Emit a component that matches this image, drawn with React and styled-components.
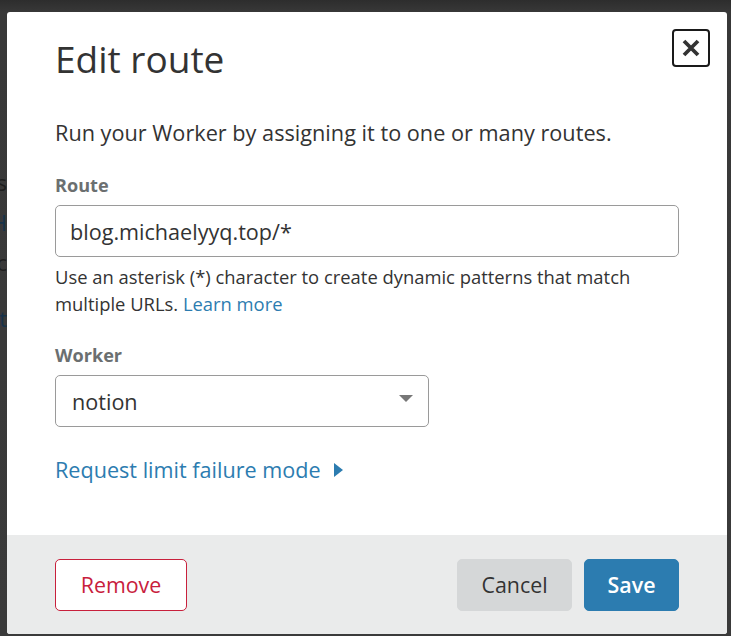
import React from "react";
import styled, { createGlobalStyle } from "styled-components";

const GlobalStyles = createGlobalStyle`
  html, body {
    margin: 0;
    padding: 0;
    height: 100%;
  }
  body {
    background: #3a3a3a;
    font-family: 'Open Sans', 'Noto Sans', sans-serif;
    color: #333;
    overflow: hidden;
  }
`;

const Backdrop = styled.div`
  position: fixed;
  inset: 0;
  background: linear-gradient(#2d2d2d 0, #383838 12px, #3a3a3a 100%);
`;

const PeekColumn = styled.div`
  width: 7px;
  overflow: hidden;
  padding-top: 162px;
  display: flex;
  flex-direction: column;
  align-items: flex-end;
  font-size: 22px;
  line-height: 40px;
`;

const Peek = styled.span`
  color: ${(p) => (p.link ? "#17324a" : "#1e1e1e")};
  white-space: nowrap;
  margin-top: ${(p) => p.gap || 0}px;
`;

const Modal = styled.div`
  position: fixed;
  top: 12px;
  left: 7px;
  width: 720px;
  height: 622px;
  background: #fff;
  border-radius: 3px;
  display: flex;
  flex-direction: column;
  overflow: hidden;
`;

const Body = styled.div`
  flex: 1 1 auto;
  min-height: 0;
  padding: 24px 48px 0;
  position: relative;
`;

const Title = styled.h2`
  margin: 0;
  font-size: 37px;
  line-height: 46px;
  font-weight: 400;
  color: #333;
`;

const CloseButton = styled.button`
  position: absolute;
  top: 17px;
  right: 17px;
  width: 38px;
  height: 38px;
  border: 2px solid #1a1a1a;
  border-radius: 4px;
  background: #fff;
  padding: 0;
  display: flex;
  align-items: center;
  justify-content: center;
`;

const Intro = styled.p`
  margin: 37px 0 0;
  font-size: 21.7px;
  line-height: 28px;
  color: #333;
`;

const Label = styled.div`
  margin-top: ${(p) => p.top}px;
  font-size: 18.1px;
  font-weight: 700;
  line-height: 24px;
  color: #6b6f70;
`;

const Field = styled.div`
  margin-top: 8px;
  width: ${(p) => p.width}px;
  height: 52px;
  box-sizing: border-box;
  border: 1px solid #9a9a9a;
  border-radius: 5px;
  display: flex;
  align-items: center;
  justify-content: space-between;
  padding: 0 15px 0 ${(p) => p.indent}px;
  font-size: 21.6px;
  color: #333;
`;

const Caret = styled.span`
  width: 0;
  height: 0;
  border-left: 7.5px solid transparent;
  border-right: 7.5px solid transparent;
  border-top: 7px solid #777;
  margin-bottom: 5px;
`;

const Help = styled.p`
  margin: 6px 0 0;
  font-size: 18.4px;
  line-height: 27px;
  color: #333;
`;

const Link = styled.a`
  color: #2c7cb0;
  text-decoration: none;
`;

const Disclosure = styled.div`
  margin-top: 29px;
  display: flex;
  align-items: center;
  gap: 13px;
  font-size: 21.6px;
  line-height: 28px;
  color: #2c7cb0;
`;

const RightTriangle = styled.span`
  width: 0;
  height: 0;
  border-top: 7px solid transparent;
  border-bottom: 7px solid transparent;
  border-left: 9px solid #2c7cb0;
`;

const Footer = styled.div`
  flex: 0 0 99px;
  background: #eaebeb;
  display: flex;
  align-items: center;
  justify-content: space-between;
  padding: 0 48px 0 48px;
`;

const Actions = styled.div`
  display: flex;
  gap: 12px;
`;

const Button = styled.button`
  height: 52px;
  width: ${(p) => p.width}px;
  padding: 0;
  box-sizing: border-box;
  border-radius: 5px;
  font-family: inherit;
  font-size: 21.4px;
  font-weight: ${(p) => (p.primary ? 600 : 400)};
  cursor: pointer;
  border: 1px solid ${(p) =>
    p.danger ? "#c8203c" : p.primary ? "#2c7cb0" : "#d5d7d8"};
  background: ${(p) =>
    p.danger ? "#fff" : p.primary ? "#2c7cb0" : "#d5d7d8"};
  color: ${(p) => (p.danger ? "#c8203c" : p.primary ? "#fff" : "#333")};
`;

const App = () => {
  return (
    <>
      <GlobalStyles />
      <Backdrop>
        <PeekColumn>
          <Peek>s</Peek>
          <Peek link>H</Peek>
          <Peek>c</Peek>
          <Peek link gap={16}>t</Peek>
        </PeekColumn>
      </Backdrop>
      <Modal>
        <Body>
          <Title>Edit route</Title>
          <CloseButton aria-label="Close">
            <svg width="20" height="20" viewBox="0 0 20 20">
              <path
                d="M3 3 L17 17 M17 3 L3 17"
                stroke="#333"
                strokeWidth="3.8"
                strokeLinecap="butt"
              />
            </svg>
          </CloseButton>
          <Intro>Run your Worker by assigning it to one or many routes.</Intro>
          <Label top={26}>Route</Label>
          <Field width={624} indent={14}>blog.michaelyyq.top/*</Field>
          <Help>
            Use an asterisk (*) character to create dynamic patterns that match
            <br />
            multiple URLs. <Link href="#">Learn more</Link>
          </Help>
          <Label top={26}>Worker</Label>
          <Field width={374} indent={16}>
            notion
            <Caret />
          </Field>
          <Disclosure>
            Request limit failure mode
            <RightTriangle />
          </Disclosure>
        </Body>
        <Footer>
          <Button danger width={132}>Remove</Button>
          <Actions>
            <Button width={115}>Cancel</Button>
            <Button primary width={95}>Save</Button>
          </Actions>
        </Footer>
      </Modal>
    </>
  );
};

export default App;
